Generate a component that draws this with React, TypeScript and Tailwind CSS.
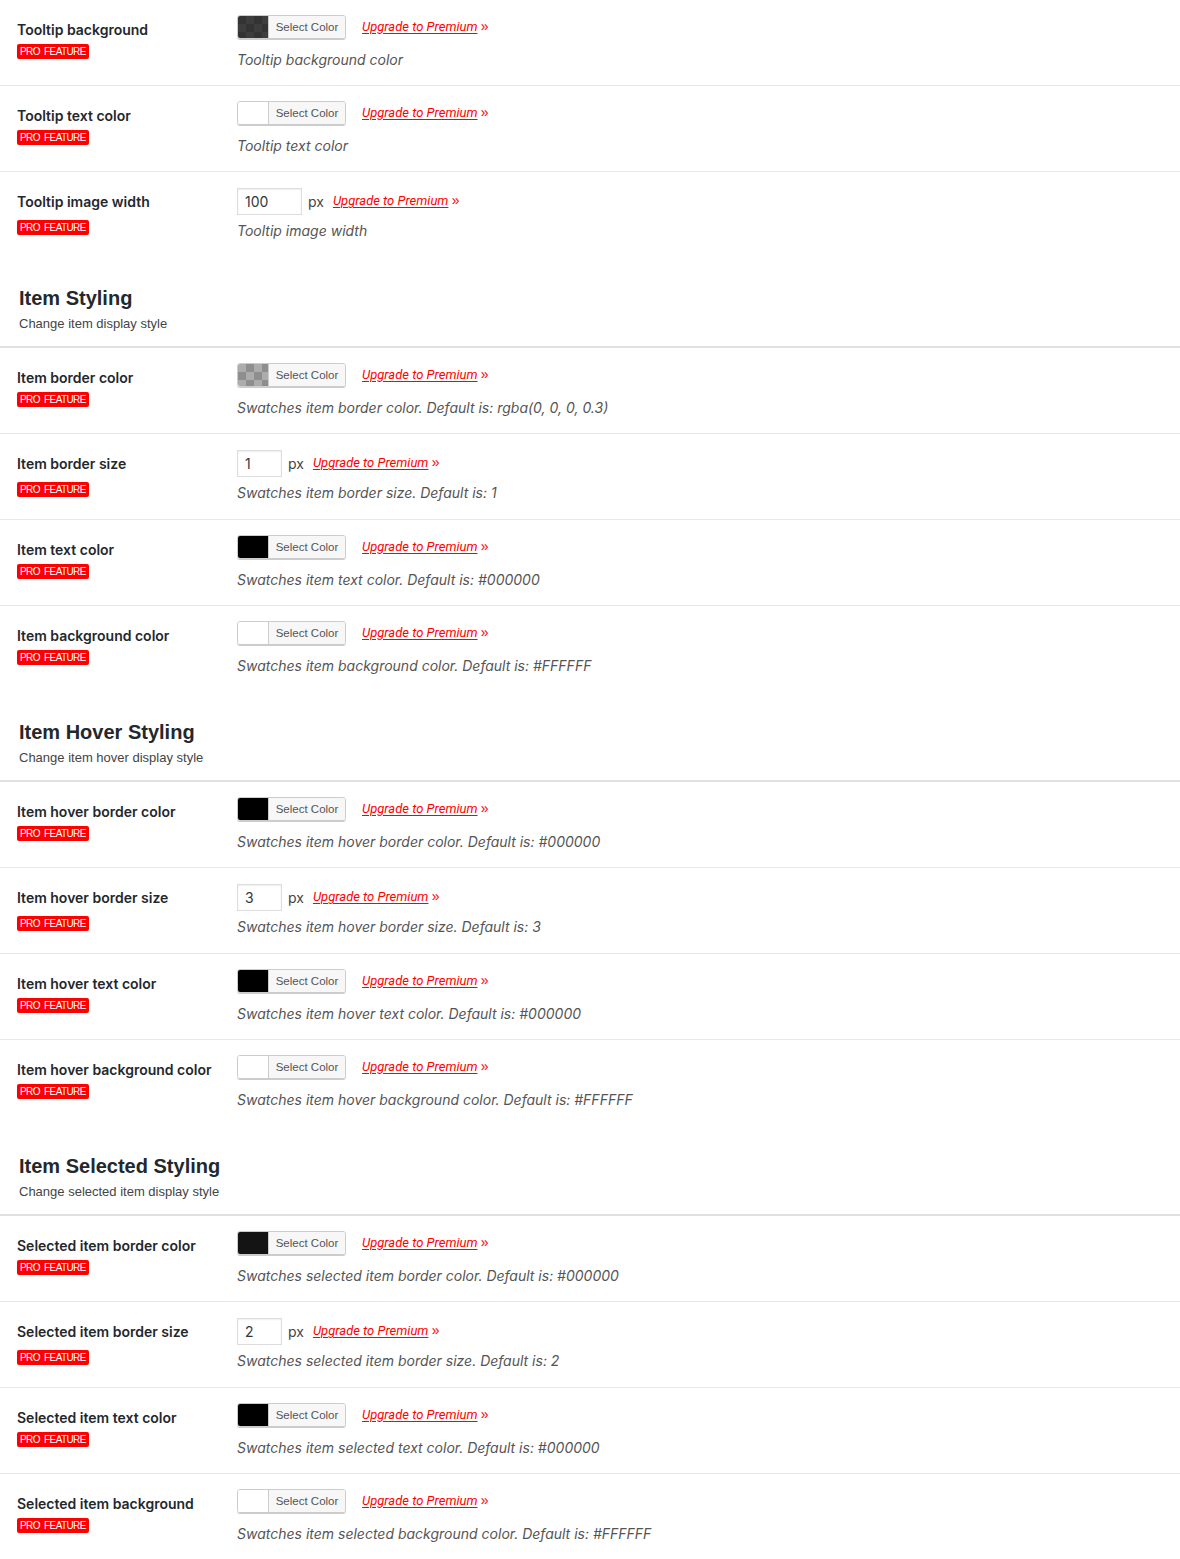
import React from "react"

type Row = {
  label: string
  kind: "color" | "number"
  swatch?: string
  value?: string
  wide?: boolean
  desc: string
}

type Group = {
  title?: string
  subtitle?: string
  rows: Row[]
}

const swatches: Record<string, string> = {
  darkChecker:
    "bg-[conic-gradient(#3d3d3d_25%,#333333_0_50%,#3d3d3d_0_75%,#333333_0)] bg-[length:16px_16px]",
  grayChecker:
    "bg-[conic-gradient(#8e8e8e_25%,#acacac_0_50%,#8e8e8e_0_75%,#acacac_0)] bg-[length:16px_16px]",
  nearBlack: "bg-[#141414]",
  black: "bg-black",
  white: "bg-white",
}

const groups: Group[] = [
  {
    rows: [
      { label: "Tooltip background", kind: "color", swatch: "darkChecker", desc: "Tooltip background color" },
      { label: "Tooltip text color", kind: "color", swatch: "white", desc: "Tooltip text color" },
      { label: "Tooltip image width", kind: "number", value: "100", wide: true, desc: "Tooltip image width" },
    ],
  },
  {
    title: "Item Styling",
    subtitle: "Change item display style",
    rows: [
      { label: "Item border color", kind: "color", swatch: "grayChecker", desc: "Swatches item border color. Default is: rgba(0, 0, 0, 0.3)" },
      { label: "Item border size", kind: "number", value: "1", desc: "Swatches item border size. Default is: 1" },
      { label: "Item text color", kind: "color", swatch: "black", desc: "Swatches item text color. Default is: #000000" },
      { label: "Item background color", kind: "color", swatch: "white", desc: "Swatches item background color. Default is: #FFFFFF" },
    ],
  },
  {
    title: "Item Hover Styling",
    subtitle: "Change item hover display style",
    rows: [
      { label: "Item hover border color", kind: "color", swatch: "black", desc: "Swatches item hover border color. Default is: #000000" },
      { label: "Item hover border size", kind: "number", value: "3", desc: "Swatches item hover border size. Default is: 3" },
      { label: "Item hover text color", kind: "color", swatch: "black", desc: "Swatches item hover text color. Default is: #000000" },
      { label: "Item hover background color", kind: "color", swatch: "white", desc: "Swatches item hover background color. Default is: #FFFFFF" },
    ],
  },
  {
    title: "Item Selected Styling",
    subtitle: "Change selected item display style",
    rows: [
      { label: "Selected item border color", kind: "color", swatch: "nearBlack", desc: "Swatches selected item border color. Default is: #000000" },
      { label: "Selected item border size", kind: "number", value: "2", desc: "Swatches selected item border size. Default is: 2" },
      { label: "Selected item text color", kind: "color", swatch: "black", desc: "Swatches item selected text color. Default is: #000000" },
      { label: "Selected item background", kind: "color", swatch: "white", desc: "Swatches item selected background color. Default is: #FFFFFF" },
    ],
  },
]

function ProBadge({ low }: { low?: boolean }) {
  return (
    <span
      className={`inline-flex h-[15px] items-center rounded-[2px] bg-[#ff0000] px-[3px] text-[10px] leading-none tracking-[-0.6px] [word-spacing:2px] text-white font-['Liberation_Sans',Arial,sans-serif] ${
        low ? "mt-[8px]" : "mt-[4px]"
      }`}
    >
      PRO FEATURE
    </span>
  )
}

function UpgradeLink() {
  return (
    <span className="mb-[2px] text-[13px] text-[#ff0000] font-['Roboto',sans-serif]">
      <a href="#" className="italic underline decoration-[#ff0000] underline-offset-[2px]">
        Upgrade to Premium
      </a>{" "}
      <span className="text-[14px] font-['Liberation_Sans',Arial,sans-serif]">»</span>
    </span>
  )
}

function SettingRow({ row, last }: { row: Row; last: boolean }) {
  const isNumber = row.kind === "number"
  return (
    <div className={`flex h-[86px] pl-[17px] ${last ? "" : "border-b border-[#e8e8e8]"}`}>
      <div className="flex w-[220px] flex-col items-start pt-[20px]">
        <span className="text-[14px] leading-[20px] font-semibold text-[#23282d]">{row.label}</span>
        <ProBadge low={isNumber} />
      </div>
      <div className="flex flex-col items-start">
        {isNumber ? (
          <div className="mt-[16px] flex items-center">
            <div
              className={`flex h-[27px] items-center border border-[#dddddd] bg-white pl-[7px] text-[14px] text-[#32373c] shadow-[inset_0_1px_2px_rgba(0,0,0,0.07)] ${
                row.wide ? "w-[65px]" : "w-[45px]"
              }`}
            >
              {row.value}
            </div>
            <span className="ml-[6px] mr-[9px] text-[14px] text-[#444]">px</span>
            <UpgradeLink />
          </div>
        ) : (
          <div className="mt-[15px] flex items-center">
            <div className="flex h-[24px] overflow-hidden rounded-[3px] border border-[#cccccc] shadow-[0_1px_0_#cccccc]">
              <span className={`w-[30px] ${swatches[row.swatch ?? "white"]}`} />
              <span className="flex w-[77px] items-center justify-center border-l border-[#cccccc] bg-[#f7f7f7] pt-[1px] text-[11.5px] text-[#555] font-['Liberation_Sans',Arial,sans-serif]">
                Select Color
              </span>
            </div>
            <span className="ml-[16px] flex">
              <UpgradeLink />
            </span>
          </div>
        )}
        <p className={`${isNumber ? "mt-[6px]" : "mt-[11px]"} text-[14px] leading-[20px] italic text-[#555]`}>
          {row.desc}
        </p>
      </div>
    </div>
  )
}

export default function App() {
  return (
    <div className="w-[1180px] bg-white font-['Inter','Roboto',sans-serif]">
      {groups.map((group, gi) => (
        <section key={gi}>
          {group.title && (
            <div className="h-[90px] border-b-2 border-[#e0e0e0] pl-[19px] pt-[26px] font-['Liberation_Sans',Arial,sans-serif]">
              <h2 className="text-[20px] leading-[28px] font-bold text-[#23282d]">{group.title}</h2>
              <p className="mt-[2px] text-[13px] leading-[20px] text-[#444]">{group.subtitle}</p>
            </div>
          )}
          {group.rows.map((row, ri) => (
            <SettingRow key={row.label} row={row} last={ri === group.rows.length - 1} />
          ))}
        </section>
      ))}
    </div>
  )
}
